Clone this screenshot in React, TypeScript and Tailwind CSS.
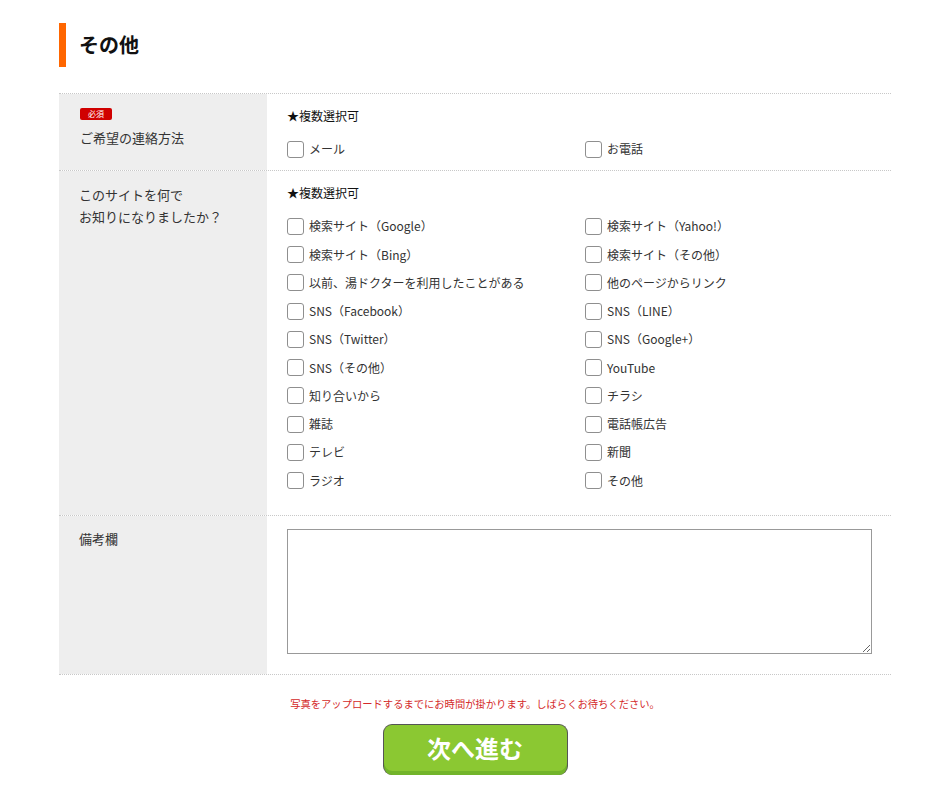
import React from "react";

const contactOpts = ["メール", "お電話"];
const sourceOpts = [
  "検索サイト（Google）",
  "検索サイト（Yahoo!）",
  "検索サイト（Bing）",
  "検索サイト（その他）",
  "以前、湯ドクターを利用したことがある",
  "他のページからリンク",
  "SNS（Facebook）",
  "SNS（LINE）",
  "SNS（Twitter）",
  "SNS（Google+）",
  "SNS（その他）",
  "YouTube",
  "知り合いから",
  "チラシ",
  "雑誌",
  "電話帳広告",
  "テレビ",
  "新聞",
  "ラジオ",
  "その他",
];

function Check({ label }: { label: string }) {
  return (
    <label className="flex h-[28.25px] items-center">
      <span className="box-border block h-[17px] w-[17px] shrink-0 rounded-[3px] border border-[#8f8f8f] bg-white" />
      <span className="ml-[5px] text-[12px] leading-[20px] text-[#333]">{label}</span>
    </label>
  );
}

export default function App() {
  return (
    <div
      className="min-h-[792px] bg-white pt-[23px]"
      style={{ fontFamily: '"Noto Sans CJK JP", "Noto Sans", sans-serif' }}
    >
      <div className="ml-[59px] w-[832px]">
        <h2 className="flex h-[44px] items-center border-l-[7px] border-[#ff6600] pl-[13px] text-[20px] font-bold leading-none text-[#111]">
          その他
        </h2>

        <div className="mt-[26px] border-t border-dotted border-[#c8c8c8]">
          {/* Row 1 */}
          <div className="flex border-b border-dotted border-[#c8c8c8]">
            <div className="w-[208px] shrink-0 bg-[#eeeeee] pl-[21px] pt-[14px]">
              <span className="flex h-[12px] w-[32px] items-center justify-center rounded-[2px] bg-[#d00000] text-[8px] leading-none text-white">
                必須
              </span>
              <div className="mt-[7px] text-[13px] leading-[22px] text-[#333]">ご希望の連絡方法</div>
            </div>
            <div className="flex-1 pb-[7px] pl-[20px] pr-[20px] pt-[12px]">
              <div className="text-[12px] leading-[20px] text-[#111]">★複数選択可</div>
              <div className="mt-[9px] grid grid-cols-[298px_1fr]">
                {contactOpts.map((o) => (
                  <Check key={o} label={o} />
                ))}
              </div>
            </div>
          </div>

          {/* Row 2 */}
          <div className="flex border-b border-dotted border-[#c8c8c8]">
            <div className="w-[208px] shrink-0 bg-[#eeeeee] pl-[20px] pt-[13px]">
              <div className="text-[13px] leading-[22px] text-[#333]">
                このサイトを何で
                <br />
                お知りになりましたか？
              </div>
            </div>
            <div className="flex-1 pb-[20px] pl-[20px] pr-[20px] pt-[12px]">
              <div className="text-[12px] leading-[20px] text-[#111]">★複数選択可</div>
              <div className="mt-[9px] grid grid-cols-[298px_1fr]">
                {sourceOpts.map((o) => (
                  <Check key={o} label={o} />
                ))}
              </div>
            </div>
          </div>

          {/* Row 3 */}
          <div className="flex border-b border-dotted border-[#c8c8c8]">
            <div className="w-[208px] shrink-0 bg-[#eeeeee] pl-[20px] pt-[12px]">
              <div className="text-[13px] leading-[22px] text-[#333]">備考欄</div>
            </div>
            <div className="flex-1 pb-[20px] pl-[20px] pr-[20px] pt-[13px]">
              <textarea className="box-border block h-[125px] w-[585px] border border-[#999] bg-white outline-none" />
            </div>
          </div>
        </div>

        <p className="mt-[22px] text-center text-[10.3px] leading-[14px] text-[#d42a2a]">
          写真をアップロードするまでにお時間が掛かります。しばらくお待ちください。
        </p>

        <div className="mt-[13px] flex justify-center">
          <button className="box-border flex h-[51px] w-[185px] items-center justify-center rounded-[9px] border border-[#555] border-b-0 bg-[#8bc832] pb-[3px] text-[24px] font-bold leading-none text-white shadow-[inset_0_-4px_0_#72b42a]">
            次へ進む
          </button>
        </div>
      </div>
    </div>
  );
}
